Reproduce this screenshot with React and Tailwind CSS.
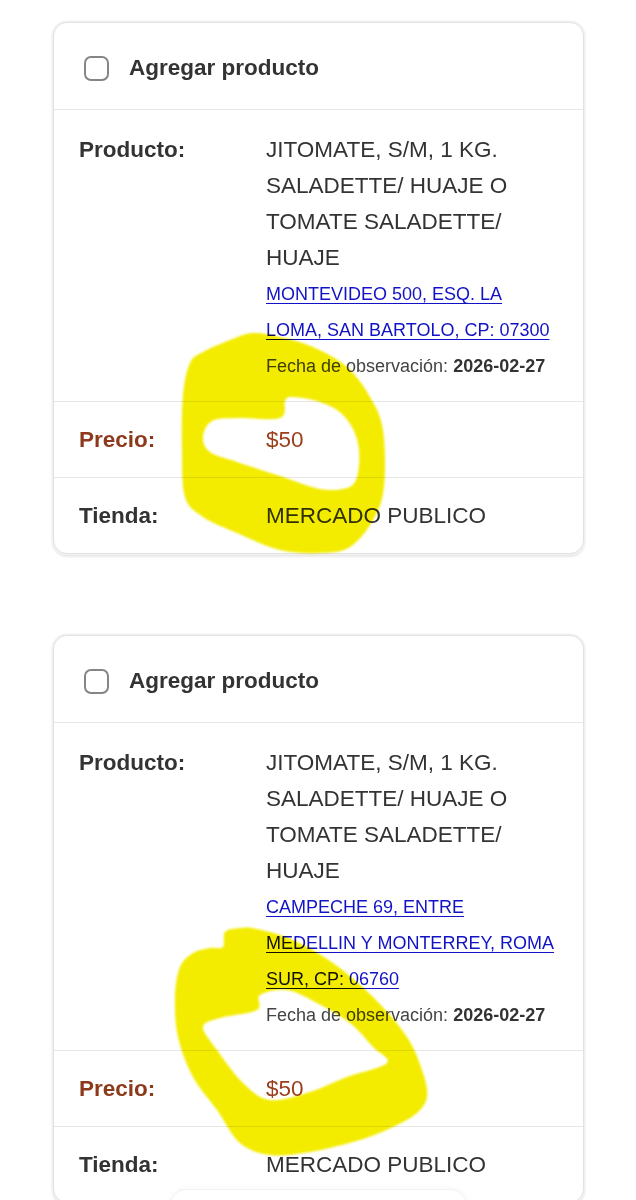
import React from 'react';

const items = [
  {
    name: 'JITOMATE, S/M, 1 KG. SALADETTE/ HUAJE O TOMATE SALADETTE/ HUAJE',
    address: 'MONTEVIDEO 500, ESQ. LA LOMA, SAN BARTOLO, CP: 07300',
    date: '2026-02-27',
    price: '$50',
    store: 'MERCADO PUBLICO',
  },
  {
    name: 'JITOMATE, S/M, 1 KG. SALADETTE/ HUAJE O TOMATE SALADETTE/ HUAJE',
    address: 'CAMPECHE 69, ENTRE MEDELLIN Y MONTERREY, ROMA SUR, CP: 06760',
    date: '2026-02-27',
    price: '$50',
    store: 'MERCADO PUBLICO',
  },
];

// closed catmull-rom curve through the points
const smooth = (pts) => {
  const n = pts.length;
  let d = `M${pts[0][0]},${pts[0][1]}`;
  for (let i = 0; i < n; i++) {
    const p0 = pts[(i - 1 + n) % n];
    const p1 = pts[i];
    const p2 = pts[(i + 1) % n];
    const p3 = pts[(i + 2) % n];
    const c1 = [p1[0] + (p2[0] - p0[0]) / 6, p1[1] + (p2[1] - p0[1]) / 6];
    const c2 = [p2[0] - (p3[0] - p1[0]) / 6, p2[1] - (p3[1] - p1[1]) / 6];
    d += ` C${c1[0]},${c1[1]} ${c2[0]},${c2[1]} ${p2[0]},${p2[1]}`;
  }
  return d + ' Z';
};

const mark1Outer = [[183,395],[190,363],[203,352],[230,340],[253,333],[280,337],[313,347],[347,367],[370,397],[383,430],[384,487],[373,520],[350,547],[320,553],[280,550],[237,533],[203,517],[185,497],[182,450]];
const mark1Inner = [[203,437],[212,421],[237,418],[280,418],[285,401],[291,397],[313,400],[337,410],[352,427],[359,450],[357,477],[347,488],[320,489],[280,476],[237,462],[210,452]];
const mark2Outer = [[223,947],[225,932],[240,928],[257,929],[293,940],[333,963],[373,997],[407,1037],[423,1073],[427,1097],[417,1113],[393,1127],[360,1140],[310,1152],[270,1155],[240,1143],[217,1110],[193,1077],[178,1037],[175,997],[180,967],[193,953],[210,948]];
const mark2Inner = [[203,1027],[220,1018],[257,1010],[260,995],[287,990],[317,1003],[350,1023],[373,1047],[387,1063],[347,1077],[310,1092],[270,1100],[243,1083],[217,1050]];

const Highlighter = () => (
  <svg
    className="absolute top-0 left-0 pointer-events-none mix-blend-multiply blur-[1px]"
    width="636"
    height="1200"
    viewBox="0 0 636 1200"
  >
    <path d={smooth(mark1Outer) + ' ' + smooth(mark1Inner)} fill="#f3ec00" fillRule="evenodd" />
    <path d={smooth(mark2Outer) + ' ' + smooth(mark2Inner)} fill="#f3ec00" fillRule="evenodd" />
  </svg>
);

const Row = ({ label, children, labelClass = 'text-[#333]', pad = 'py-[19.5px]', last }) => (
  <div className={`grid grid-cols-[187px_1fr] px-[25px] ${pad} ${last ? '' : 'border-b border-[#e6e6e6]'}`}>
    <div className={`font-bold ${labelClass}`}>{label}</div>
    <div>{children}</div>
  </div>
);

const ProductCard = ({ item }) => (
  <div className="rounded-[14px] bg-white border border-[#e2e2e2] shadow-[0_0_0_1.5px_#f1f1f1,0_2px_3px_rgba(0,0,0,0.18)] overflow-hidden">
    <div className="flex items-center gap-[20px] px-[30px] pt-[27px] pb-[23px] border-b border-[#e6e6e6]">
      <span className="w-[25px] h-[25px] rounded-[7px] border-2 border-[#858585] bg-white shrink-0" />
      <span className="font-bold text-[#333]">Agregar producto</span>
    </div>
    <Row label="Producto:" pad="pt-[22px] pb-[17px]">
      <div className="text-[#333]">{item.name}</div>
      <a href="#" className="block text-[18px] text-[#1212c6] underline underline-offset-[3px] decoration-1">
        {item.address}
      </a>
      <div className="text-[18px] text-[#444]">
        Fecha de observación: <span className="font-bold text-[#333]">{item.date}</span>
      </div>
    </Row>
    <Row label="Precio:" labelClass="text-[#8c3a1b]">
      <span className="text-[#9b3e1c]">{item.price}</span>
    </Row>
    <Row label="Tienda:" last>
      <span className="text-[#333]">{item.store}</span>
    </Row>
  </div>
);

export default function App() {
  return (
    <div
      className="relative bg-white h-[1200px] overflow-hidden text-[22.5px] leading-9"
      style={{ fontFamily: '"Liberation Sans", Arial, sans-serif' }}
    >
      <div className="flex flex-col gap-[81px] pt-[22px] pl-[53px] pr-[52px]">
        {items.map((item, i) => (
          <ProductCard key={i} item={item} />
        ))}
      </div>
      <div className="absolute top-[1189px] left-[170px] w-[297px] h-[48px] rounded-[16px] bg-white border border-[#f2f2f2] shadow-[0_0_6px_rgba(0,0,0,0.04)]" />
      <Highlighter />
    </div>
  );
}
